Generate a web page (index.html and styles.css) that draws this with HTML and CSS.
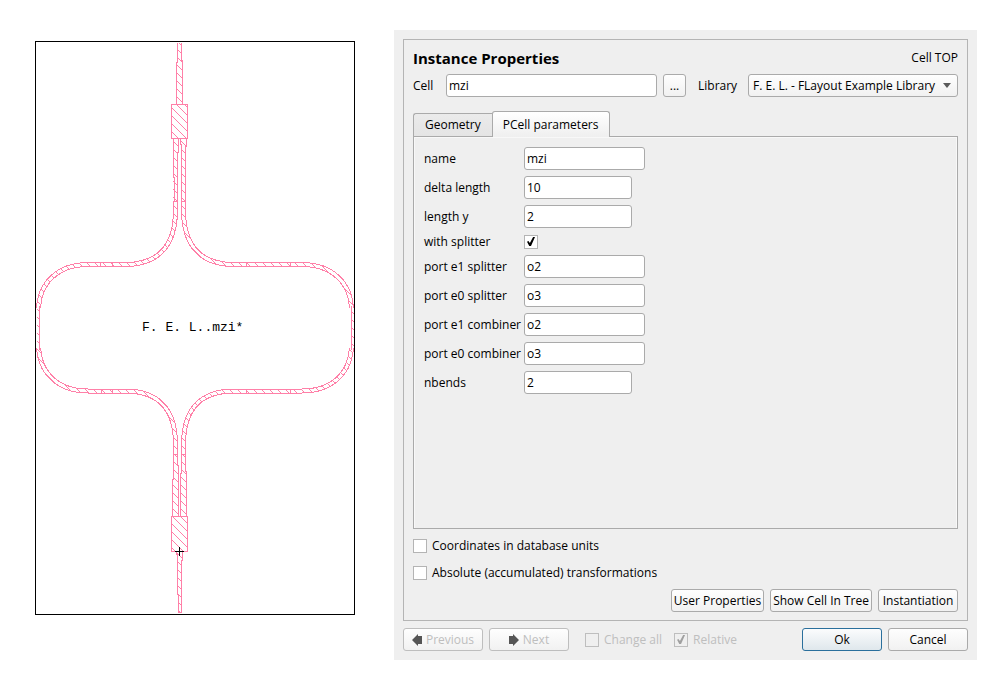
FILE: index.html
```html
<!DOCTYPE html>
<html lang="en">
<head>
<meta charset="utf-8">
<title>Instance Properties</title>
<link rel="stylesheet" href="styles.css">
</head>
<body>
<main class="page">
  <svg class="layout" viewBox="35 41 320 574" role="img" aria-label="Cell layout">
    <defs>
      <pattern id="hatch" width="8" height="8" patternUnits="userSpaceOnUse">
        <path d="M-1 -1L9 9" class="hatch-line"/>
      </pattern>
      <g id="arms">
        <path d="M175.5 201V210C175.5 246 158 264.5 125 264.5H88C58 264.5 38.5 283 38.5 311V344C38.5 373 58 391 88 391H125C158 391 175.5 409 175.5 444V454"/>
        <path d="M183.5 201V210C183.5 246 201 264.5 234 264.5H302C332 264.5 351.5 283 351.5 311V344C351.5 373 332 391 302 391H234C201 391 183.5 409 183.5 444V454"/>
      </g>
    </defs>
    <rect x="35.5" y="41.5" width="319" height="573" class="bounds"/>
    <use href="#arms" class="arm-edge"/>
    <use href="#arms" class="arm-core"/>
    <use href="#arms" class="arm-fill"/>
    <path d="M36 308h5v40h-5zM349 308h5v40h-5z" class="blank"/>
    <path d="M37 308h2v40h-2zM352 308h2v40h-2z" class="fill"/>
    <path d="M39.5 306V350M351.5 306V350" class="wire"/>
    <path d="M177.5 43V62.5H176.5V104H182.5V60.5H181.5V43M173.5 138V177.5H174.5V201M173.5 138H178.5V152.5H177.5V201M180.5 138V144.5H181.5V201M186.5 138V146.5H185.5V201M173 201.5H178M181 201.5H186M173.5 454V479.5H172.5V516H178.5V465.5H177.5V454M181.5 454V473.5H180.5V516H186.5V471.5H185.5V454M173 454.5H178M181 454.5H186M176.5 552V554.5H177.5V594.5H178.5V612.5H181.5V560.5H182.5V552M100.5 263V266M112.5 263V266M246.5 263V266M290.5 263V266M101.5 390V393M112.5 390V393M246.5 390V393M290.5 390V393" class="wire"/>
    <path d="M177 43h5v19h1v42h-7V62h1zM173 138h5v63h-5zM181 138h5v63h-5zM173 454h5v62h-6v-37h1zM181 454h5v18h1v44h-6zM177 552h6v8h-1v52h-4v-18h-1z" class="fill"/>
    <rect x="171.5" y="104.5" width="16" height="34" class="coupler"/>
    <rect x="171.5" y="516.5" width="16" height="35" class="coupler"/>
    <path d="M175 551.5H184M179.5 547V556" class="origin"/>
    <text x="142" y="331" class="cell-name">F. E. L..mzi*</text>
  </svg>

  <form class="dialog">
    <section class="frame">
      <header class="head">
        <h1 class="title">Instance Properties</h1>
        <span>Cell TOP</span>
      </header>

      <div class="cell-row">
        <label class="cell-label" for="cell">Cell</label>
        <input class="field grow" id="cell" type="text" value="mzi">
        <button class="btn browse" type="button" aria-label="Browse cells">...</button>
        <label class="library-label" for="library">Library</label>
        <span class="combo">
          <select class="btn library" id="library"><option>F. E. L. - FLayout Example Library</option></select>
          <svg class="combo-arrow" viewBox="0 0 8 5"><path d="M0 0H8L4 5Z"/></svg>
        </span>
      </div>

      <div class="tabs" role="tablist">
        <button class="tab" type="button" role="tab" aria-selected="false">Geometry</button>
        <button class="tab active" type="button" role="tab" aria-selected="true">PCell parameters</button>
      </div>
      <div class="pane" role="tabpanel">
        <div class="params">
          <label for="p-name">name</label><input class="field text" id="p-name" type="text" value="mzi">
          <label for="p-delta">delta length</label><input class="field number" id="p-delta" type="text" value="10">
          <label for="p-length">length y</label><input class="field number" id="p-length" type="text" value="2">
          <label class="check-label" for="p-splitter">with splitter</label><input class="check" id="p-splitter" type="checkbox" checked>
          <label for="p-e1s">port e1 splitter</label><input class="field text" id="p-e1s" type="text" value="o2">
          <label for="p-e0s">port e0 splitter</label><input class="field text" id="p-e0s" type="text" value="o3">
          <label for="p-e1c">port e1 combiner</label><input class="field text" id="p-e1c" type="text" value="o2">
          <label for="p-e0c">port e0 combiner</label><input class="field text" id="p-e0c" type="text" value="o3">
          <label for="p-nbends">nbends</label><input class="field number" id="p-nbends" type="text" value="2">
        </div>
      </div>

      <div class="options">
        <label class="option"><input class="check" type="checkbox">Coordinates in database units</label>
        <label class="option"><input class="check" type="checkbox">Absolute (accumulated) transformations</label>
      </div>
      <div class="actions">
        <button class="btn" type="button">User Properties</button>
        <button class="btn" type="button">Show Cell In Tree</button>
        <button class="btn" type="button">Instantiation</button>
      </div>
    </section>

    <footer class="foot">
      <button class="btn" type="button" disabled><svg class="arrow" viewBox="0 0 10 12"><path d="M0 6L6 0V2H10V10H6V12Z"/></svg>Previous</button>
      <button class="btn" type="button" disabled><svg class="arrow" viewBox="0 0 10 12"><path d="M10 6L4 0V2H0V10H4V12Z"/></svg>Next</button>
      <div class="modes">
        <label class="option off"><input class="check" type="checkbox" disabled>Change all</label>
        <label class="option off"><input class="check" type="checkbox" checked disabled>Relative</label>
      </div>
      <button class="btn primary" type="submit">Ok</button>
      <button class="btn" type="button">Cancel</button>
    </footer>
  </form>
</main>
</body>
</html>
```
FILE: styles.css
```css
* {
  box-sizing: border-box;
}

body {
  margin: 0;
  background: #fff;
  color: #000;
  font: 12px/14px "Open Sans", "Noto Sans", sans-serif;
}

button,
input,
select {
  margin: 0;
  color: inherit;
  font: inherit;
}

.page {
  display: flex;
  align-items: flex-start;
  gap: 39px;
  min-height: 100vh;
  padding: 30px 16px 17px 35px;
}

/* Layout drawing */
.layout {
  flex: none;
  width: 320px;
  margin-top: 11px;
  shape-rendering: crispEdges;
}

.bounds {
  fill: #fff;
  stroke: #000;
}

.hatch-line,
.wire {
  fill: none;
  stroke: #ff80a8;
}

.arm-edge {
  fill: none;
  stroke: #ff80a8;
  stroke-width: 5px;
}

.arm-core {
  fill: none;
  stroke: #fff;
  stroke-width: 3px;
}

.arm-fill {
  fill: none;
  stroke: url(#hatch);
  stroke-width: 3px;
}

.blank {
  fill: #fff;
}

.fill {
  fill: url(#hatch);
}

.coupler {
  fill: url(#hatch);
  stroke: #ff80a8;
}

.origin {
  stroke: #000;
}

.cell-name {
  font: 13px "Liberation Mono", monospace;
}

/* Dialog */
.dialog {
  display: flex;
  flex: 1;
  flex-direction: column;
  gap: 7px;
  min-height: calc(100vh - 47px);
  padding: 9px;
  background: #efefef;
}

.frame {
  display: flex;
  flex: 1;
  flex-direction: column;
  padding: 9px 9px 8px;
  border: 1px solid #b4b4b4;
}

.head {
  display: flex;
  align-items: center;
  justify-content: space-between;
  height: 18px;
  margin-bottom: 7px;
}

.title {
  margin: 0;
  font-size: 15px;
  line-height: 18px;
}

.cell-row {
  display: flex;
  align-items: center;
  margin-bottom: 14px;
}

.cell-label {
  width: 33px;
}

.library-label {
  width: 50px;
  margin-left: 12px;
}

.field {
  height: 23px;
  padding: 0 2px;
  border: 1px solid #aaa;
  border-radius: 3px;
  background: #fff;
}

.grow {
  flex: 1;
  min-width: 0;
}

.text {
  width: 121px;
}

.number {
  width: 108px;
}

.btn {
  display: inline-flex;
  align-items: center;
  justify-content: center;
  min-width: 80px;
  height: 23px;
  padding: 0 2px;
  border: 1px solid #aaa;
  border-radius: 3px;
  background: linear-gradient(#fefefe, #f1f1f1);
  white-space: nowrap;
}

.btn:disabled {
  border-color: #bebebe;
  color: #bebebe;
}

.browse {
  min-width: 23px;
  margin-left: 6px;
}

.primary {
  border-color: #2a6f9c;
  background: linear-gradient(#fbfcfd, #dfe7ec);
}

.combo {
  position: relative;
}

.library {
  display: block;
  width: 210px;
  padding: 0 4px;
  appearance: none;
}

.combo-arrow {
  position: absolute;
  top: 9px;
  right: 7px;
  width: 8px;
  height: 5px;
  fill: #5a5a5a;
  pointer-events: none;
}

.tabs {
  z-index: 1;
  display: flex;
  align-items: flex-end;
  height: 26px;
  margin-bottom: -1px;
}

.tab {
  height: 24px;
  padding: 0 11px;
  border: 1px solid #aaa;
  border-right: 0;
  border-radius: 3px 0 0 0;
  background: linear-gradient(#ebebeb, #e4e4e4);
}

.tab.active {
  height: 26px;
  padding: 0 10px;
  border-right: 1px solid #aaa;
  border-bottom: 0;
  border-radius: 3px 3px 0 0;
  background: linear-gradient(#fff, #efefef);
}

.pane {
  flex: 1;
  padding: 10px;
  border: 1px solid #aaa;
  box-shadow: inset 1px 1px #f8f8f8, inset -1px 0 #f8f8f8;
}

.params {
  display: grid;
  grid-template-columns: 94px 1fr;
  align-items: center;
  gap: 6px;
  white-space: nowrap;
}

.check-label {
  line-height: 15px;
}

.check {
  display: grid;
  flex: none;
  place-items: center;
  width: 14px;
  height: 14px;
  border: 1px solid #b4b4b4;
  background: #fff;
  appearance: none;
}

.check:checked::before {
  width: 8px;
  height: 9px;
  background: #000;
  clip-path: polygon(0 52%, 18% 44%, 36% 68%, 76% 0, 100% 0, 50% 100%, 28% 100%);
  content: "";
}

.check:disabled {
  border-color: #bebebe;
  background: #efefef;
}

.check:disabled::before {
  background: #a0a0a0;
}

.options {
  display: grid;
  gap: 13px;
  margin: 10px 0 9px;
}

.option {
  display: flex;
  align-items: center;
  gap: 5px;
}

.off {
  color: #bebebe;
}

.actions {
  display: flex;
  justify-content: flex-end;
  gap: 6px;
}

.foot {
  display: flex;
  align-items: center;
  gap: 6px;
}

.modes {
  display: flex;
  flex: 1;
  gap: 12px;
  margin-left: 10px;
}

.arrow {
  width: 10px;
  height: 12px;
  margin-right: 4px;
  fill: #555;
}
```
